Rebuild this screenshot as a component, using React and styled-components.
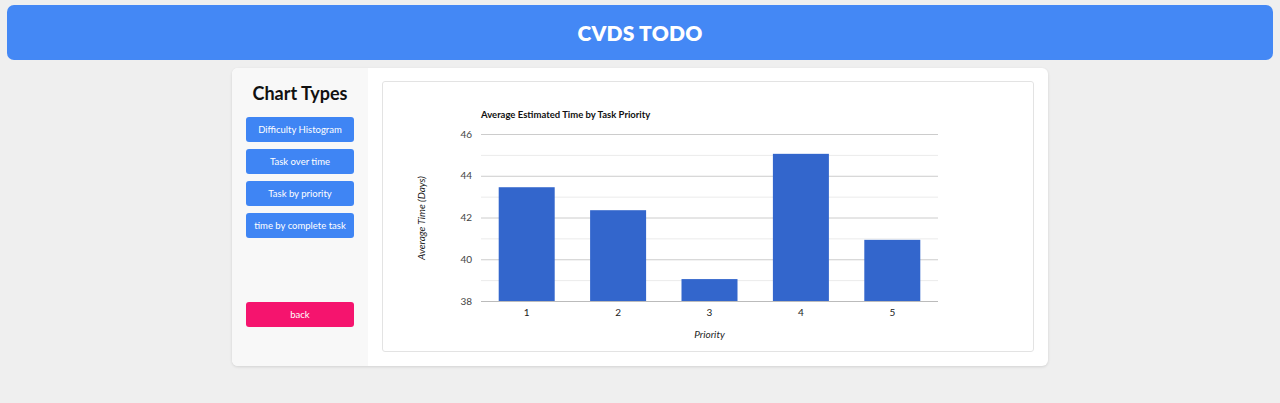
import React from "react";
import styled, { createGlobalStyle } from "styled-components";

const GlobalStyle = createGlobalStyle`
  html, body {
    margin: 0;
    padding: 0;
    background: #efefef;
    font-family: Lato, "Open Sans", sans-serif;
  }
`;

const chartTypes = [
  "Difficulty Histogram",
  "Task over time",
  "Task by priority",
  "time by complete task",
];

const data = [
  { label: "1", value: 43.45 },
  { label: "2", value: 42.35 },
  { label: "3", value: 39.05 },
  { label: "4", value: 45.05 },
  { label: "5", value: 40.93 },
];

const PriorityChart = () => {
  const left = 98;
  const right = 555;
  const top = 52;
  const bottom = 219;
  const min = 38;
  const max = 46;
  const scale = (bottom - top) / (max - min);
  const y = (v) => bottom - (v - min) * scale;
  const slot = (right - left) / data.length;
  const barWidth = 56;

  const ticks = [38, 39, 40, 41, 42, 43, 44, 45, 46];

  return (
    <svg width="650" height="269" viewBox="0 0 650 269">
      <text x={left} y={36} fontSize="9.5" fontWeight="700" fill="#111" fontFamily="Lato, sans-serif">
        Average Estimated Time by Task Priority
      </text>
      {ticks.map((t) => (
        <line
          key={t}
          x1={left}
          x2={right}
          y1={y(t) + 0.5}
          y2={y(t) + 0.5}
          stroke={t % 2 === 0 ? "#cccccc" : "#ebebeb"}
          strokeWidth="1"
        />
      ))}
      {ticks
        .filter((t) => t % 2 === 0)
        .map((t) => (
          <text
            key={t}
            x={89}
            y={y(t) + 3.5}
            textAnchor="end"
            fontSize="10"
            fill="#444"
            fontFamily="Lato, sans-serif"
          >
            {t}
          </text>
        ))}
      {data.map((d, i) => {
        const cx = left + slot * (i + 0.5);
        return (
          <g key={d.label}>
            <rect x={cx - barWidth / 2} y={y(d.value)} width={barWidth} height={bottom - y(d.value)} fill="#3366cc" />
            <text x={cx} y={234} textAnchor="middle" fontSize="10" fill="#222" fontFamily="Lato, sans-serif">
              {d.label}
            </text>
          </g>
        );
      })}
      <line x1={left} x2={right} y1={bottom + 0.5} y2={bottom + 0.5} stroke="#bbbbbb" />
      <text
        x={(left + right) / 2}
        y={256}
        textAnchor="middle"
        fontSize="10"
        fontStyle="italic"
        fill="#222"
        fontFamily="Lato, sans-serif"
      >
        Priority
      </text>
      <text
        transform="translate(42 136) rotate(-90)"
        textAnchor="middle"
        fontSize="10"
        fontStyle="italic"
        fill="#222"
        fontFamily="Lato, sans-serif"
      >
        Average Time (Days)
      </text>
    </svg>
  );
};

export default function App() {
  return (
    <>
      <GlobalStyle />
      <Page>
        <Header>CVDS TODO</Header>
        <Card>
          <Sidebar>
            <SideTitle>Chart Types</SideTitle>
            <ButtonList>
              {chartTypes.map((c) => (
                <ChartButton key={c}>{c}</ChartButton>
              ))}
            </ButtonList>
            <BackButton>back</BackButton>
          </Sidebar>
          <Main>
            <ChartBox>
              <PriorityChart />
            </ChartBox>
          </Main>
        </Card>
      </Page>
    </>
  );
}

const Page = styled.div`
  padding: 5px 7px 37px;
  display: flex;
  flex-direction: column;
  align-items: center;
  gap: 8px;
`;

const Header = styled.header`
  align-self: stretch;
  height: 55px;
  background: #4488f5;
  border-radius: 7px;
  color: #fff;
  font-size: 21px;
  font-weight: 800;
  display: flex;
  align-items: center;
  justify-content: center;
  letter-spacing: 0.2px;
`;

const Card = styled.div`
  width: 816px;
  height: 298px;
  display: flex;
  background: #fff;
  border-radius: 6px;
  overflow: hidden;
  box-shadow: 0 1px 3px rgba(0, 0, 0, 0.12);
`;

const Sidebar = styled.aside`
  width: 136px;
  flex-shrink: 0;
  background: #f8f8f8;
  box-sizing: border-box;
  padding: 14px 14px 39px;
  display: flex;
  flex-direction: column;
  align-items: stretch;
`;

const SideTitle = styled.h2`
  margin: 0 0 13px;
  text-align: center;
  font-size: 18px;
  font-weight: 700;
  color: #111;
  line-height: 22px;
`;

const ButtonList = styled.div`
  display: flex;
  flex-direction: column;
  gap: 7px;
`;

const ChartButton = styled.button`
  height: 25px;
  border: none;
  border-radius: 3px;
  background: #3f85f4;
  color: #fff;
  font-family: inherit;
  font-size: 9.5px;
  padding: 0;
  cursor: pointer;
`;

const BackButton = styled(ChartButton)`
  margin-top: auto;
  background: #f5146e;
`;

const Main = styled.main`
  flex: 1;
  padding: 13px 14px 14px;
  display: flex;
`;

const ChartBox = styled.div`
  flex: 1;
  border: 1px solid #e3e3e3;
  border-radius: 3px;
  overflow: hidden;
`;
